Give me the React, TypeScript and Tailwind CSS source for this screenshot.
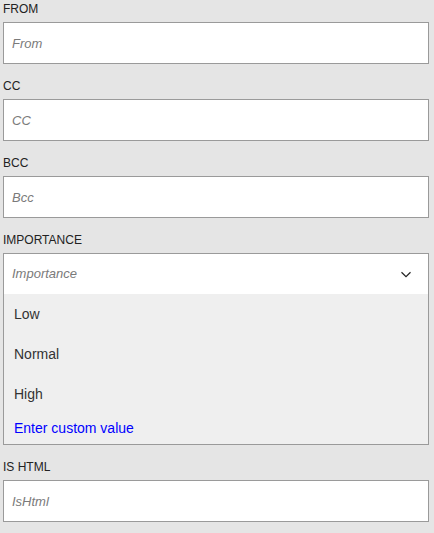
import React from "react";

const font = { fontFamily: '"Liberation Sans", Arial, sans-serif' };

function Field({ label, placeholder }: { label: string; placeholder: string }) {
  return (
    <div className="flex flex-col">
      <label className="h-[14px] text-[12px] leading-[14px] text-[#222] mb-[6px]">{label}</label>
      <input
        placeholder={placeholder}
        className="h-[42px] w-full border border-[#9a9a9a] bg-white pl-[8px] text-[13px] text-[#333] outline-none placeholder:italic placeholder:text-[#7a7a7a]"
      />
    </div>
  );
}

function Chevron() {
  return (
    <svg width="12" height="7" viewBox="0 0 12 7" fill="none" aria-hidden>
      <path d="M1.5 1.2 6 5.6 10.5 1.2" stroke="#222" strokeWidth="1.2" />
    </svg>
  );
}

const options = ["Low", "Normal", "High"];

export default function App() {
  return (
    <div className="min-h-[533px] w-full bg-[#e5e5e5] pl-[3px] pr-[5px] pt-[2px]" style={font}>
      <div className="flex flex-col gap-[15px]">
        <Field label="FROM" placeholder="From" />
        <Field label="CC" placeholder="CC" />
        <Field label="BCC" placeholder="Bcc" />

        <div className="flex flex-col">
          <label className="h-[14px] text-[12px] leading-[14px] text-[#222] mb-[6px]">IMPORTANCE</label>
          <div className="border border-[#9a9a9a] bg-[#efefef]">
            <div className="flex h-[40px] items-center justify-between bg-white pl-[8px] pr-[16px]">
              <span className="text-[13px] italic text-[#7a7a7a]">Importance</span>
              <Chevron />
            </div>
            {options.map((o) => (
              <div key={o} className="flex h-[40px] items-center pl-[10px] text-[14px] text-[#333]">
                {o}
              </div>
            ))}
            <div className="flex h-[30px] items-center pl-[10px] pb-[2px] text-[14px] text-[#0000ff]">
              Enter custom value
            </div>
          </div>
        </div>

        <Field label="IS HTML" placeholder="IsHtml" />
      </div>
    </div>
  );
}
